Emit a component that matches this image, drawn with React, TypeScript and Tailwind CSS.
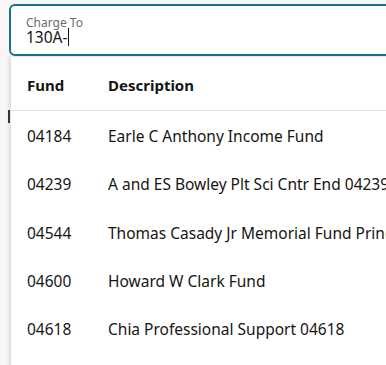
import React from "react";

const rows = [
  ["04184", "Earle C Anthony Income Fund"],
  ["04239", "A and ES Bowley Plt Sci Cntr End 04239"],
  ["04544", "Thomas Casady Jr Memorial Fund Principal"],
  ["04600", "Howard W Clark Fund"],
  ["04618", "Chia Professional Support 04618"],
];

export default function App() {
  return (
    <div
      className="relative w-[386px] h-[365px] overflow-hidden bg-[#f8f7f6] text-[#161513]"
      style={{ fontFamily: '"Noto Sans", "Open Sans", sans-serif' }}
    >
      <div className="absolute left-[8px] top-[110px] w-[2px] h-[13px] bg-[#3a3a3a]" />
      <div className="pt-[4px] pl-[9px]">
        <div className="w-[420px] h-[52px] border-2 border-[#1b6f92] rounded-l-[6px] bg-white pl-[15px] pt-[10px]">
          <div className="text-[12px] leading-[14px] text-[#6f6b67]">Charge To</div>
          <div className="flex items-center mt-[-2px] h-[18px] text-[15.5px] leading-[18px] text-[#161513]">
            <span>130A-</span>
            <span className="w-[1px] h-[18px] bg-[#161513]" />
          </div>
        </div>
      </div>
      <div className="absolute left-[11px] top-[57px] w-[420px] h-[320px] bg-white shadow-[-2px_0_4px_rgba(0,0,0,0.12)]">
        <div className="flex items-center h-[54px] pt-[3px] border-b border-[#e4e2df] font-bold text-[15px]">
          <div className="w-[97px] pl-[16px]">Fund</div>
          <div>Description</div>
        </div>
        {rows.map(([f, d]) => (
          <div key={f} className="flex items-center h-[48.3px] pt-[3px] text-[15.5px] whitespace-nowrap">
            <div className="w-[97px] pl-[16px]">{f}</div>
            <div>{d}</div>
          </div>
        ))}
      </div>
    </div>
  );
}
